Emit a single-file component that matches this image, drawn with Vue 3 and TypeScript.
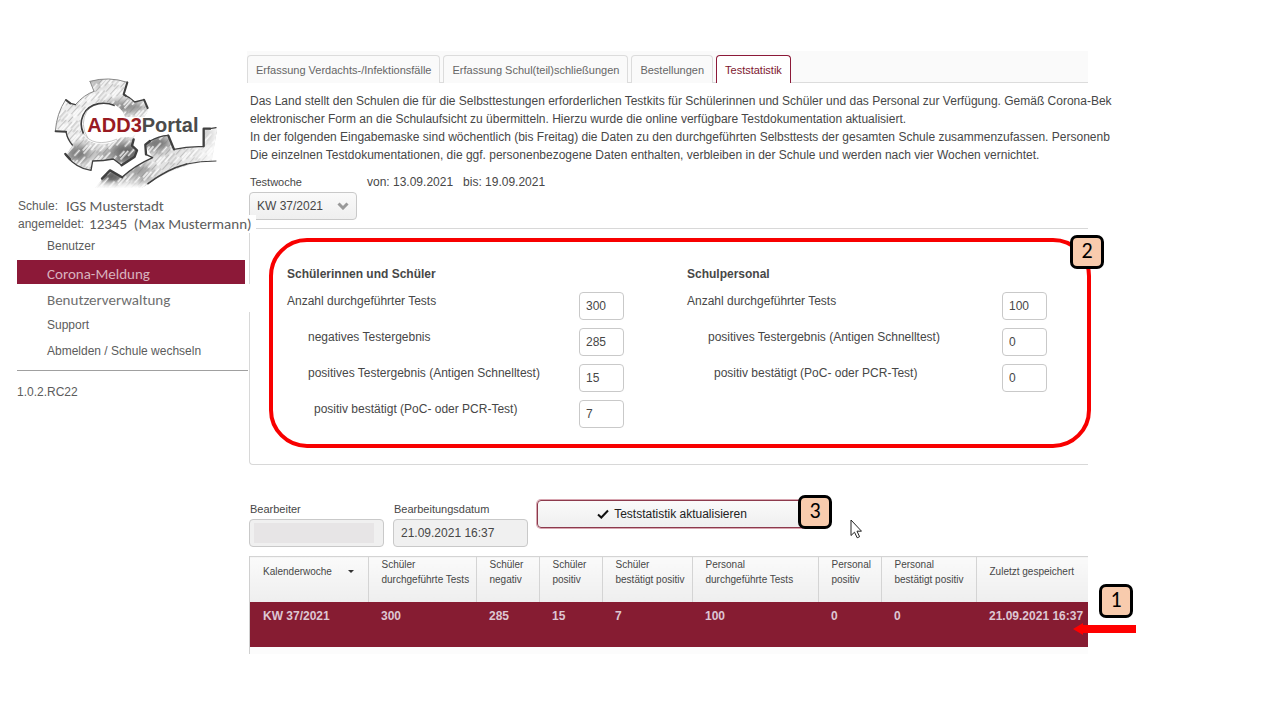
<script setup lang="ts">
import { ref } from 'vue'

interface Field { id: string; label: string; value: string; level: number }
interface Group { title: string; fields: Field[]; className: string }

const tabs = ['Erfassung Verdachts-/Infektionsfälle', 'Erfassung Schul(teil)schließungen', 'Bestellungen', 'Teststatistik']
const activeTab = ref('Teststatistik')
const week = ref('KW 37/2021')
const editor = ref('')
const editedAt = ref('21.09.2021 16:37')

const groups = ref<Group[]>([
  {
    title: 'Schülerinnen und Schüler',
    className: 'pupils',
    fields: [
      { id: 's-total', label: 'Anzahl durchgeführter Tests', value: '300', level: 0 },
      { id: 's-neg', label: 'negatives Testergebnis', value: '285', level: 1 },
      { id: 's-pos', label: 'positives Testergebnis (Antigen Schnelltest)', value: '15', level: 1 },
      { id: 's-pcr', label: 'positiv bestätigt (PoC- oder PCR-Test)', value: '7', level: 2 },
    ],
  },
  {
    title: 'Schulpersonal',
    className: 'staff',
    fields: [
      { id: 'p-total', label: 'Anzahl durchgeführter Tests', value: '100', level: 0 },
      { id: 'p-pos', label: 'positives Testergebnis (Antigen Schnelltest)', value: '0', level: 1 },
      { id: 'p-pcr', label: 'positiv bestätigt (PoC- oder PCR-Test)', value: '0', level: 2 },
    ],
  },
])

const columns = [
  { top: 'Kalenderwoche', bottom: '', value: 'KW 37/2021', cls: 'c-week' },
  { top: 'Schüler', bottom: 'durchgeführte Tests', value: '300', cls: 'c-done' },
  { top: 'Schüler', bottom: 'negativ', value: '285', cls: 'c-small' },
  { top: 'Schüler', bottom: 'positiv', value: '15', cls: 'c-small' },
  { top: 'Schüler', bottom: 'bestätigt positiv', value: '7', cls: 'c-conf' },
  { top: 'Personal', bottom: 'durchgeführte Tests', value: '100', cls: 'c-pdone' },
  { top: 'Personal', bottom: 'positiv', value: '0', cls: 'c-small' },
  { top: 'Personal', bottom: 'bestätigt positiv', value: '0', cls: 'c-pconf' },
  { top: 'Zuletzt gespeichert', bottom: '', value: '21.09.2021 16:37', cls: 'c-saved' },
]
</script>

<template>
  <div class="page">
    <aside class="sidebar">
      <svg class="logo" viewBox="90 30 540 372" role="img" aria-label="ADD3Portal">
        <defs>
          <pattern id="hatch" width="47" height="61" patternUnits="userSpaceOnUse" patternTransform="rotate(42)">
            <path d="M3 4V34M11 20V58M19 0V22M27 14V50M38 0V30M43 30V60" stroke="#777" stroke-width="3" opacity="0.45" />
            <path d="M7 0V24M23 26V61M33 4V38M15 34V56" stroke="#fff" stroke-width="5" opacity="0.8" />
          </pattern>
          <filter id="soft" x="-50%" y="-50%" width="200%" height="200%"><feGaussianBlur stdDeviation="12" /></filter>
          <filter id="pencil" x="-10%" y="-10%" width="120%" height="120%"><feGaussianBlur stdDeviation="1.2" /></filter>
          <clipPath id="wheel">
            <path clip-rule="evenodd" d="M240 64Q296 48 352 67L341 103Q360 111 374 126L405 118L415 150L370 235L369 258L382 272L375 290L335 318L310 297Q280 303 248 303L243 331Q200 326 168 286L188 256Q172 238 170 215L136 213Q140 160 167 119L196 134Q222 104 252 94ZM278 128A62 62 0 1 0 279 251A62 62 0 1 0 278 128Z" />
          </clipPath>
          <clipPath id="rack">
            <path d="M255 384L300 331L336 350Q375 316 428 293L406 256Q438 228 475 225L492 269Q535 259 583 260L581 206L622 203L605 303Q510 309 414 372L395 384Z" />
          </clipPath>
          <linearGradient id="fade" x1="0" y1="0" x2="1" y2="0">
            <stop offset="0" stop-color="#fff" stop-opacity="0" />
            <stop offset="1" stop-color="#fff" stop-opacity="0.9" />
          </linearGradient>
          <linearGradient id="fade-down" x1="0" y1="0" x2="0" y2="1">
            <stop offset="0" stop-color="#fff" stop-opacity="0" />
            <stop offset="1" stop-color="#fff" />
          </linearGradient>
        </defs>
        <g clip-path="url(#wheel)">
          <rect x="120" y="40" width="310" height="300" fill="#efefef" />
          <g filter="url(#soft)" fill="#777">
            <ellipse cx="345" cy="140" rx="60" ry="16" />
            <ellipse cx="345" cy="280" rx="52" ry="34" fill="#666" />
            <ellipse cx="205" cy="280" rx="38" ry="26" fill="#777" />
            <ellipse cx="262" cy="66" rx="26" ry="8" />
            <ellipse cx="290" cy="285" rx="40" ry="14" fill="#999" />
          </g>
          <rect x="120" y="40" width="310" height="300" fill="url(#hatch)" filter="url(#pencil)" />
        </g>
        <g clip-path="url(#rack)">
          <rect x="250" y="190" width="380" height="200" fill="#e4e4e4" />
          <g filter="url(#soft)" fill="#707070">
            <ellipse cx="305" cy="350" rx="36" ry="22" fill="#555" />
            <ellipse cx="440" cy="250" rx="42" ry="22" />
            <ellipse cx="598" cy="222" rx="16" ry="28" />
            <ellipse cx="385" cy="330" rx="40" ry="15" fill="#888" />
            <ellipse cx="400" cy="366" rx="30" ry="10" fill="#888" />
          </g>
          <rect x="250" y="190" width="380" height="200" fill="url(#hatch)" filter="url(#pencil)" />
          <path fill="url(#fade)" d="M510 190H630V320H510Z" />
          <path fill="url(#fade-down)" d="M250 358H420V386H250Z" />
        </g>
        <g fill="none" stroke="#3f3f3f" stroke-linecap="round" stroke-linejoin="round" filter="url(#pencil)">
          <path stroke-width="3" stroke="#888" d="M240 64Q296 48 352 67M252 94Q222 104 196 134M136 213Q140 160 167 119M240 64L252 94" />
          <path stroke-width="6" d="M352 67L341 103L347 107M168 120L181 130M402 119L413 144M137 214L168 215" />
          <path stroke-width="4" d="M347 107Q360 112 374 126L402 119M168 215Q172 238 187 255M181 130L196 134" />
          <path stroke-width="4" d="M168 286Q200 326 243 331L248 303Q280 303 310 297L335 316" />
          <path stroke-width="7" d="M166 282L180 298M335 316L374 290L381 271L366 257L371 238" />
          <path stroke-width="5" d="M312 136Q292 127 266 131C219 140 204 185 220 220" />
          <path stroke-width="2" stroke="#aaa" d="M220 220Q250 265 320 238M232 150Q206 193 234 235" />
          <path stroke-width="7" d="M276 356L300 331L336 352M408 283L406 254L420 243M475 227L492 268M581 258V206H600" />
          <path stroke-width="4" d="M420 243Q446 228 475 226M336 352Q375 316 428 293L409 284M492 268Q535 258 581 260M600 206L618 203" />
          <path stroke-width="5" d="M414 371Q470 328 530 312" />
          <path stroke-width="3" d="M530 312Q570 303 618 303" />
        </g>
        <path d="M230 171H574V203H402L366 232H250Z" fill="#fff" opacity="0.94" />
        <text x="232" y="217" font-size="60"><tspan fill="#981b22">ADD3</tspan><tspan fill="#4b4b4b">Portal</tspan></text>
      </svg>
      <dl class="account">
        <div><dt>Schule:</dt><dd class="school">IGS Musterstadt</dd></div>
        <div><dt>angemeldet:</dt><dd>12345&nbsp; (Max Mustermann)</dd></div>
      </dl>
      <nav class="menu">
        <a href="#benutzer">Benutzer</a>
        <a href="#corona" class="current">Corona-Meldung</a>
        <a href="#verwaltung" class="admin">Benutzerverwaltung</a>
        <a href="#support">Support</a>
        <a href="#abmelden">Abmelden / Schule wechseln</a>
      </nav>
      <p class="version">1.0.2.RC22</p>
    </aside>

    <main class="content">
      <div class="tabs" role="tablist">
        <button v-for="tab in tabs" :key="tab" type="button" role="tab" class="tab"
          :class="{ active: tab === activeTab }" :aria-selected="tab === activeTab" @click="activeTab = tab">{{ tab }}</button>
      </div>

      <p class="intro">
        Das Land stellt den Schulen die für die Selbsttestungen erforderlichen Testkits für Schülerinnen und Schüler und das Personal zur Verfügung. Gemäß Corona-Bek<br>
        elektronischer Form an die Schulaufsicht zu übermitteln. Hierzu wurde die online verfügbare Testdokumentation aktualisiert.<br>
        In der folgenden Eingabemaske sind wöchentlich (bis Freitag) die Daten zu den durchgeführten Selbsttests der gesamten Schule zusammenzufassen. Personenb<br>
        Die einzelnen Testdokumentationen, die ggf. personenbezogene Daten enthalten, verbleiben in der Schule und werden nach vier Wochen vernichtet.
      </p>

      <div class="week">
        <div class="week-field">
          <label for="week">Testwoche</label>
          <div class="select">
            <select id="week" v-model="week"><option>KW 37/2021</option></select>
            <svg viewBox="0 0 12 8" aria-hidden="true"><path d="M1.5 1.5L6 6L10.5 1.5" /></svg>
          </div>
        </div>
        <span class="range">von: 13.09.2021 &nbsp; bis: 19.09.2021</span>
      </div>

      <section class="panel">
        <div v-for="group in groups" :key="group.title" class="group" :class="group.className">
          <h2>{{ group.title }}</h2>
          <div v-for="field in group.fields" :key="field.id" class="field">
            <label :for="field.id" :class="'level-' + field.level">{{ field.label }}</label>
            <input :id="field.id" v-model="field.value" type="text">
          </div>
        </div>
        <div class="outline"><span class="badge">2</span></div>
      </section>

      <div class="actions">
        <div class="readonly">
          <label for="editor">Bearbeiter</label>
          <div class="masked"><input id="editor" v-model="editor" type="text" readonly></div>
        </div>
        <div class="readonly">
          <label for="edited">Bearbeitungsdatum</label>
          <input id="edited" v-model="editedAt" type="text" readonly>
        </div>
        <div class="submit">
          <button type="button">
            <svg viewBox="0 0 12 10" aria-hidden="true"><path d="M1 5.5L4.3 8.5L11 1.5" /></svg>
            Teststatistik aktualisieren
          </button>
          <span class="badge">3</span>
          <svg class="cursor" viewBox="0 0 12 20" aria-hidden="true"><path d="M1 1V16.500L4.500 13.200L7.200 18.800L9.600 17.700L7 12.200H11.500Z" /></svg>
        </div>
      </div>

      <div class="results">
        <table>
          <thead>
            <tr>
              <th v-for="(col, i) in columns" :key="i" scope="col" :class="[col.cls, { single: !col.bottom }]">
                {{ col.top }}<span v-if="i === 0" class="sort"></span>
                <template v-if="col.bottom"><br>{{ col.bottom }}</template>
              </th>
            </tr>
          </thead>
          <tbody>
            <tr><td v-for="(col, i) in columns" :key="i">{{ col.value }}</td></tr>
          </tbody>
        </table>
        <span class="badge">1</span>
        <svg class="arrow" viewBox="0 0 63 12" aria-hidden="true"><path d="M0 6L10 0V2H63V10H10V12Z" /></svg>
      </div>
    </main>
  </div>
</template>

<style>
body { margin: 0; background: #fff; }
</style>

<style scoped>
.page {
  display: grid;
  grid-template-columns: 249px minmax(0, 1fr);
  align-items: start;
  padding: 51px 15% 40px 0;
  font: 12px/18px "Liberation Sans", Arial, sans-serif;
  color: #474747;
}
.page * { box-sizing: border-box; }
p, h2, dl, dd { margin: 0; }
button, input, select { font: inherit; color: inherit; }

.sidebar { padding: 19px 0 0 17px; position: relative; z-index: 1; }
.logo { display: block; width: 180px; height: 124px; margin-left: 23px; }
.logo text { font-family: "Liberation Sans", Arial, sans-serif; font-weight: bold; }
.account { margin-top: 3px; color: #5c5c5c; white-space: nowrap; }
.account div { display: flex; gap: 5px; padding-left: 1px; }
.account dd { font: 15px/18px Carlito, Lato, sans-serif; background: #fff; padding-right: 4px; margin-right: -7px; }
.account .school { padding-left: 3px; }
.menu { display: flex; flex-direction: column; margin-right: 1px; padding-bottom: 6px; border-bottom: 1px solid #a0a0a0; }
.menu a { padding-left: 30px; line-height: 26px; color: #5c5c5c; text-decoration: none; }
.menu a.current { margin: 1px 3px 0 0; line-height: 24px; padding-top: 2px; height: 24px; background: #8c1938; color: #d9b3bf; font-family: Carlito, Lato, sans-serif; font-size: 15px; }
.menu a.admin { margin-right: -4px; line-height: 32px; height: 28px; background: #fff; font-family: Carlito, Lato, sans-serif; font-size: 15px; color: #6e6e6e; }
.version { margin-top: 12px; color: #5c5c5c; }

.tabs { display: flex; gap: 3px; height: 32px; margin-left: -2px; padding-top: 4px; background: #fafafa; border-bottom: 1px solid #dcdcdc; }
.tab { height: 28px; padding: 0 8px; border: 1px solid #dcdcdc; border-bottom: 0; border-radius: 4px 4px 0 0; background: #fafafa; font-size: 11px; color: #666; white-space: nowrap; }
.tab.active { border-color: #8c1938; background: #fff; color: #7d1730; }

.intro { margin-top: 9px; padding-left: 1px; white-space: nowrap; }

.week { display: flex; gap: 10px; margin-top: 9px; }
.week-field { width: 108px; }
.week label, .readonly label { display: block; padding-left: 1px; font-size: 11px; }
.select { position: relative; margin-top: 1px; }
.select select { appearance: none; width: 100%; height: 28px; padding: 0 7px; border: 1px solid #c9c9c9; border-radius: 4px; background: linear-gradient(#fafafa, #efefef); }
.select svg { position: absolute; right: 8px; top: 10px; width: 12px; height: 8px; fill: none; stroke: #999; stroke-width: 3; pointer-events: none; }

.panel { position: relative; display: flex; margin-top: 8px; height: 237px; padding: 36px 0 0 37px; border: 1px solid #d8d8d8; border-right: 0; border-radius: 4px 0 0 4px; }
.group { flex: 0 0 400px; }
.group h2 { margin-bottom: 9px; font-size: 12px; line-height: 18px; }
.pupils { --label: 292px; }
.staff { --label: 315px; }
.field { display: grid; grid-template-columns: var(--label) 45px; height: 36px; white-space: nowrap; }
.field input { height: 28px; padding: 0 6px; border: 1px solid #c9c9c9; border-radius: 4px; background: #fff; width: 100%; }
.level-1 { padding-left: 21px; }
.level-2 { padding-left: 27px; }
.outline { position: absolute; top: 9px; right: -3px; bottom: 16px; left: 19px; border: 4px solid #f80000; border-radius: 38px; pointer-events: none; }
.badge { position: absolute; width: 34px; height: 34px; border: 3px solid #000; border-radius: 7px; background: #f8cbad; color: #000; font: 22px/26px Carlito, Lato, sans-serif; text-align: center; }
.outline .badge { top: -7px; right: -17px; }

.actions { display: flex; gap: 9px; margin-top: 35px; }
.readonly { flex: 0 0 135px; }
.readonly input { display: block; width: 100%; height: 28px; margin-top: 1px; padding: 0 7px; border: 1px solid #c9c9c9; border-radius: 4px; background: #f0f0f0; }
.masked { position: relative; }
.masked::after { content: ""; position: absolute; inset: 4px 10px 4px 5px; background: #e7e5e6; }
.submit { position: relative; flex: 0 0 270px; }
.submit button { display: flex; align-items: center; justify-content: center; gap: 5px; width: 100%; height: 28px; border: 1px solid #8c3a4c; border-radius: 4px; background: linear-gradient(#fafafa, #efefef); box-shadow: 0 0 0 1px #d8a6b1; color: #222; white-space: nowrap; }
.submit button svg { width: 12px; height: 10px; fill: none; stroke: #111; stroke-width: 2; }
.submit .badge { top: -5px; right: -25px; }
.cursor { position: absolute; left: 313px; top: 19px; width: 12px; height: 20px; fill: #fff; stroke: #222; }

.results { position: relative; margin-top: 9px; padding-bottom: 7px; border-left: 1px solid #d0d0d0; background: #fcfcfc; }
table { width: 100%; table-layout: fixed; border-collapse: collapse; }
th { height: 45px; padding: 0 0 0 13px; border-top: 1px solid #d4d4d4; border-right: 1px solid #d4d4d4; background: linear-gradient(#fafafa, #eee); font-size: 10px; line-height: 15px; font-weight: normal; text-align: left; vertical-align: top; white-space: nowrap; }
th:last-child { border-right: 0; }
th.single { padding-top: 7px; }
.sort { display: inline-block; margin: 0 0 2px 16px; border: 3px solid transparent; border-top-color: #333; border-bottom: 0; }
td { height: 45px; padding: 5px 0 0 13px; background: #861c32; color: #ddc6d2; font-weight: bold; vertical-align: top; white-space: nowrap; }
.c-week { width: 118px; }
.c-done { width: 108px; }
.c-small { width: 63px; }
.c-conf { width: 90px; }
.c-pdone { width: 126px; }
.c-pconf { width: 95px; }
.results .badge { top: 28px; right: -45px; }
.arrow { position: absolute; top: 67px; right: -48px; width: 63px; height: 12px; fill: #f00; }
</style>
